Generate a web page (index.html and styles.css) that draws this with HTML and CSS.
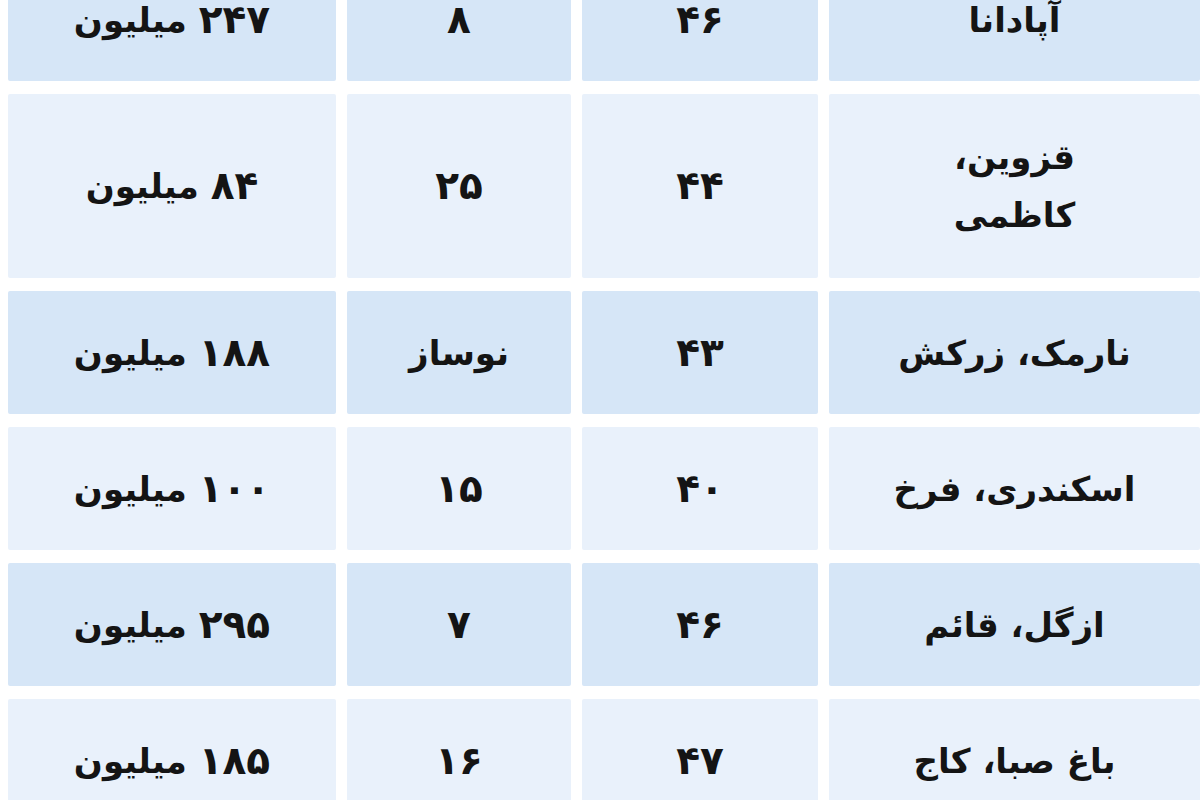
FILE: index.html
```html
<!DOCTYPE html>
<html lang="fa">
<head>
<meta charset="utf-8">
<title>جدول</title>
<link rel="stylesheet" href="styles.css">
</head>
<body>
<div class="table" dir="rtl">
  <div class="cell dark">آپادانا</div>
  <div class="cell dark"><span class="num">۴۶</span></div>
  <div class="cell dark"><span class="num">۸</span></div>
  <div class="cell dark"><span class="num">۲۴۷</span>&nbsp;میلیون</div>

  <div class="cell light tall">قزوین،<br>کاظمی</div>
  <div class="cell light tall"><span class="num">۴۴</span></div>
  <div class="cell light tall"><span class="num">۲۵</span></div>
  <div class="cell light tall"><span class="num">۸۴</span>&nbsp;میلیون</div>

  <div class="cell dark">نارمک، زرکش</div>
  <div class="cell dark"><span class="num">۴۳</span></div>
  <div class="cell dark">نوساز</div>
  <div class="cell dark"><span class="num">۱۸۸</span>&nbsp;میلیون</div>

  <div class="cell light">اسکندری، فرخ</div>
  <div class="cell light"><span class="num">۴۰</span></div>
  <div class="cell light"><span class="num">۱۵</span></div>
  <div class="cell light"><span class="num">۱۰۰</span>&nbsp;میلیون</div>

  <div class="cell dark">ازگل، قائم</div>
  <div class="cell dark"><span class="num">۴۶</span></div>
  <div class="cell dark"><span class="num">۷</span></div>
  <div class="cell dark"><span class="num">۲۹۵</span>&nbsp;میلیون</div>

  <div class="cell light">باغ صبا، کاج</div>
  <div class="cell light"><span class="num">۴۷</span></div>
  <div class="cell light"><span class="num">۱۶</span></div>
  <div class="cell light"><span class="num">۱۸۵</span>&nbsp;میلیون</div>
</div>
</body>
</html>
```
FILE: styles.css
```css
html, body {
  margin: 0;
  padding: 0;
  background: #ffffff;
  overflow: hidden;
}
.table {
  display: grid;
  grid-template-columns: 371px 236px 224px 328px;
  column-gap: 11px;
  row-gap: 13px;
  margin-top: -42px;
  padding-left: 8px;
  font-family: "DejaVu Sans", sans-serif;
  font-weight: bold;
  font-size: 34px;
  color: #141414;
}
.cell {
  height: 123px;
  display: flex;
  align-items: center;
  justify-content: center;
  text-align: center;
  line-height: 58px;
  border-radius: 2px;
}
.cell.tall {
  height: 184px;
}
.num {
  font-size: 39px;
  letter-spacing: -2px;
}
.dark {
  background: #d6e6f7;
}
.light {
  background: #e9f1fb;
}
```
